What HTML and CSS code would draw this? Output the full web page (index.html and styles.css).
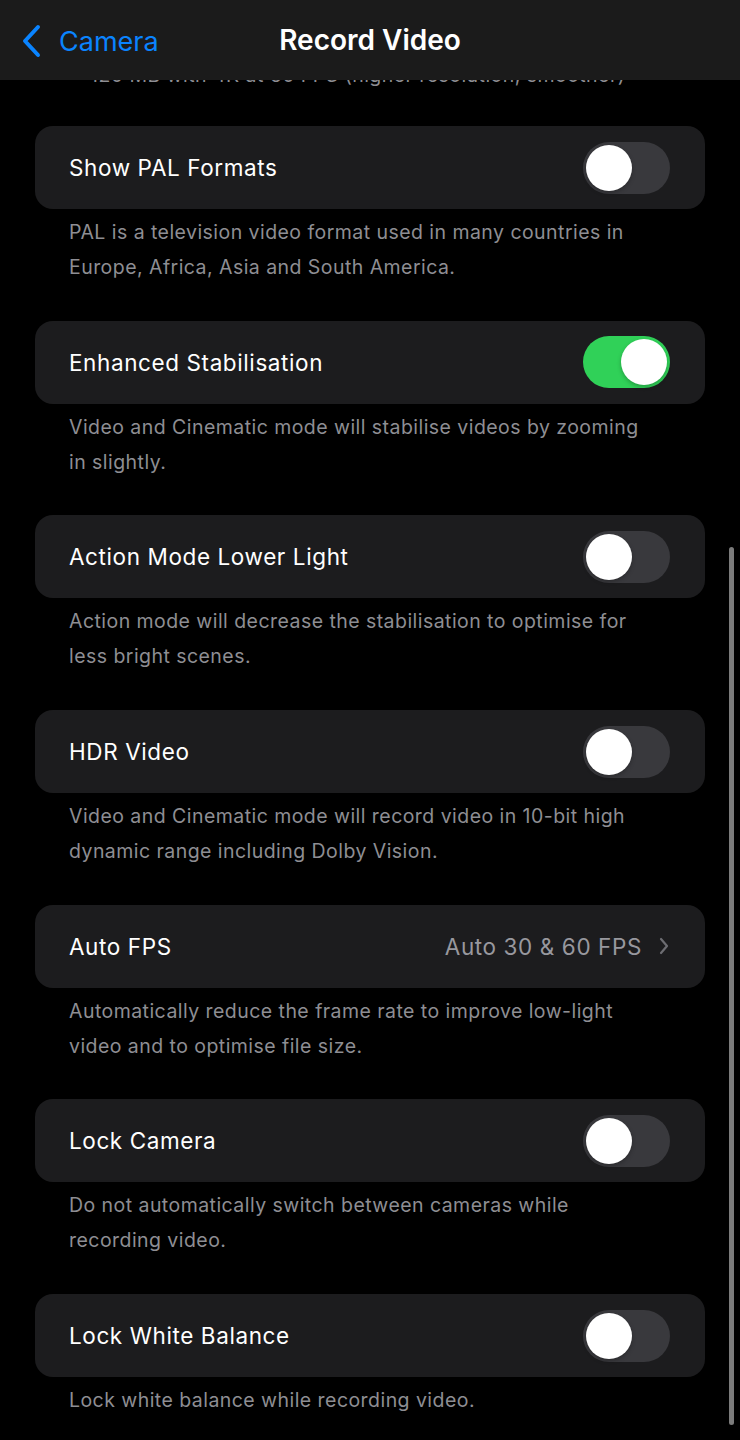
FILE: index.html
```html
<!DOCTYPE html>
<html lang="en">
<head>
    <meta charset="UTF-8">
    <meta name="viewport" content="width=device-width, initial-scale=1.0">
    <title>Record Video</title>
    <link rel="stylesheet" href="styles.css">
</head>
<body>

    <header class="nav-bar">
        <a class="back-link" href="#">
            <svg class="back-chevron" width="22" height="34" viewBox="0 0 22 34">
                <path d="M18 3 L5 17 L18 31" fill="none" stroke="#0a84ff" stroke-width="4" stroke-linecap="round" stroke-linejoin="round"/>
            </svg>
            <span>Camera</span>
        </a>
        <h1 class="nav-title">Record Video</h1>
    </header>

    <main class="settings">
        <p class="note top-note">120 MB with 4K at 60 FPS (higher resolution, smoother)</p>

        <section class="group">
            <div class="card">
                <span class="label">Show PAL Formats</span>
                <span class="toggle"><span class="knob"></span></span>
            </div>
            <p class="note">PAL is a television video format used in many countries in Europe, Africa, Asia and South America.</p>
        </section>

        <section class="group">
            <div class="card">
                <span class="label">Enhanced Stabilisation</span>
                <span class="toggle on"><span class="knob"></span></span>
            </div>
            <p class="note">Video and Cinematic mode will stabilise videos by zooming in slightly.</p>
        </section>

        <section class="group">
            <div class="card">
                <span class="label">Action Mode Lower Light</span>
                <span class="toggle"><span class="knob"></span></span>
            </div>
            <p class="note">Action mode will decrease the stabilisation to optimise for less bright scenes.</p>
        </section>

        <section class="group">
            <div class="card">
                <span class="label">HDR Video</span>
                <span class="toggle"><span class="knob"></span></span>
            </div>
            <p class="note">Video and Cinematic mode will record video in 10-bit high dynamic range including Dolby Vision.</p>
        </section>

        <section class="group">
            <div class="card">
                <span class="label">Auto FPS</span>
                <span class="value">Auto 30 &amp; 60 FPS
                    <svg class="chevron" width="12" height="20" viewBox="0 0 12 20">
                        <path d="M3 3 L9 10 L3 17" fill="none" stroke="#6d6d72" stroke-width="2.2" stroke-linecap="round" stroke-linejoin="round"/>
                    </svg>
                </span>
            </div>
            <p class="note">Automatically reduce the frame rate to improve low-light video and to optimise file size.</p>
        </section>

        <section class="group">
            <div class="card">
                <span class="label">Lock Camera</span>
                <span class="toggle"><span class="knob"></span></span>
            </div>
            <p class="note">Do not automatically switch between cameras while recording video.</p>
        </section>

        <section class="group">
            <div class="card">
                <span class="label">Lock White Balance</span>
                <span class="toggle"><span class="knob"></span></span>
            </div>
            <p class="note">Lock white balance while recording video.</p>
        </section>
    </main>

    <div class="scroll-indicator"></div>

</body>
</html>
```

FILE: styles.css
```css
body {
    margin: 0;
    background: #000;
    color: #fff;
    font-family: 'Inter', 'Roboto', sans-serif;
}
.nav-bar {
    position: fixed;
    top: 0;
    left: 0;
    right: 0;
    height: 80px;
    background-color: #1b1b1b;
    display: flex;
    align-items: center;
    justify-content: center;
    z-index: 2;
}
.back-link {
    position: absolute;
    left: 20px;
    top: 24px;
    display: flex;
    align-items: center;
    gap: 17px;
    color: #0a84ff;
    text-decoration: none;
    font-size: 27px;
}
.nav-title {
    margin: 0;
    font-size: 28px;
    font-weight: 600;
}
.settings {
    padding: 58px 35px 0 35px;
}
.note {
    margin: 0;
    padding: 6px 48px 0 34px;
    font-size: 19.5px;
    letter-spacing: 0.45px;
    line-height: 35px;
    color: #8e8e93;
}
.top-note {
    padding-top: 0;
    padding-left: 55px;
    margin-bottom: 33px;
}
.group {
    margin-bottom: 35.7px;
}
.card {
    height: 83px;
    background-color: #1c1c1e;
    border-radius: 18px;
    display: flex;
    align-items: center;
    justify-content: space-between;
    padding: 0 35px 0 34px;
}
.label {
    font-size: 22.5px;
    letter-spacing: 0.6px;
}
.value {
    display: flex;
    align-items: center;
    gap: 16px;
    font-size: 22.5px;
    letter-spacing: 0.6px;
    color: #98989e;
}
.toggle {
    width: 87px;
    height: 52px;
    border-radius: 26px;
    background-color: #39393d;
    display: flex;
    align-items: center;
    padding: 0 3px;
    box-sizing: border-box;
}
.toggle.on {
    background-color: #30d158;
    justify-content: flex-end;
}
.knob {
    width: 46px;
    height: 46px;
    border-radius: 50%;
    background-color: #fff;
    box-shadow: 0px 2px 4px rgba(0, 0, 0, 0.25);
}
.scroll-indicator {
    position: fixed;
    left: 729px;
    top: 547px;
    width: 5px;
    height: 878px;
    border-radius: 3px;
    background-color: #7b7b7b;
}
```
